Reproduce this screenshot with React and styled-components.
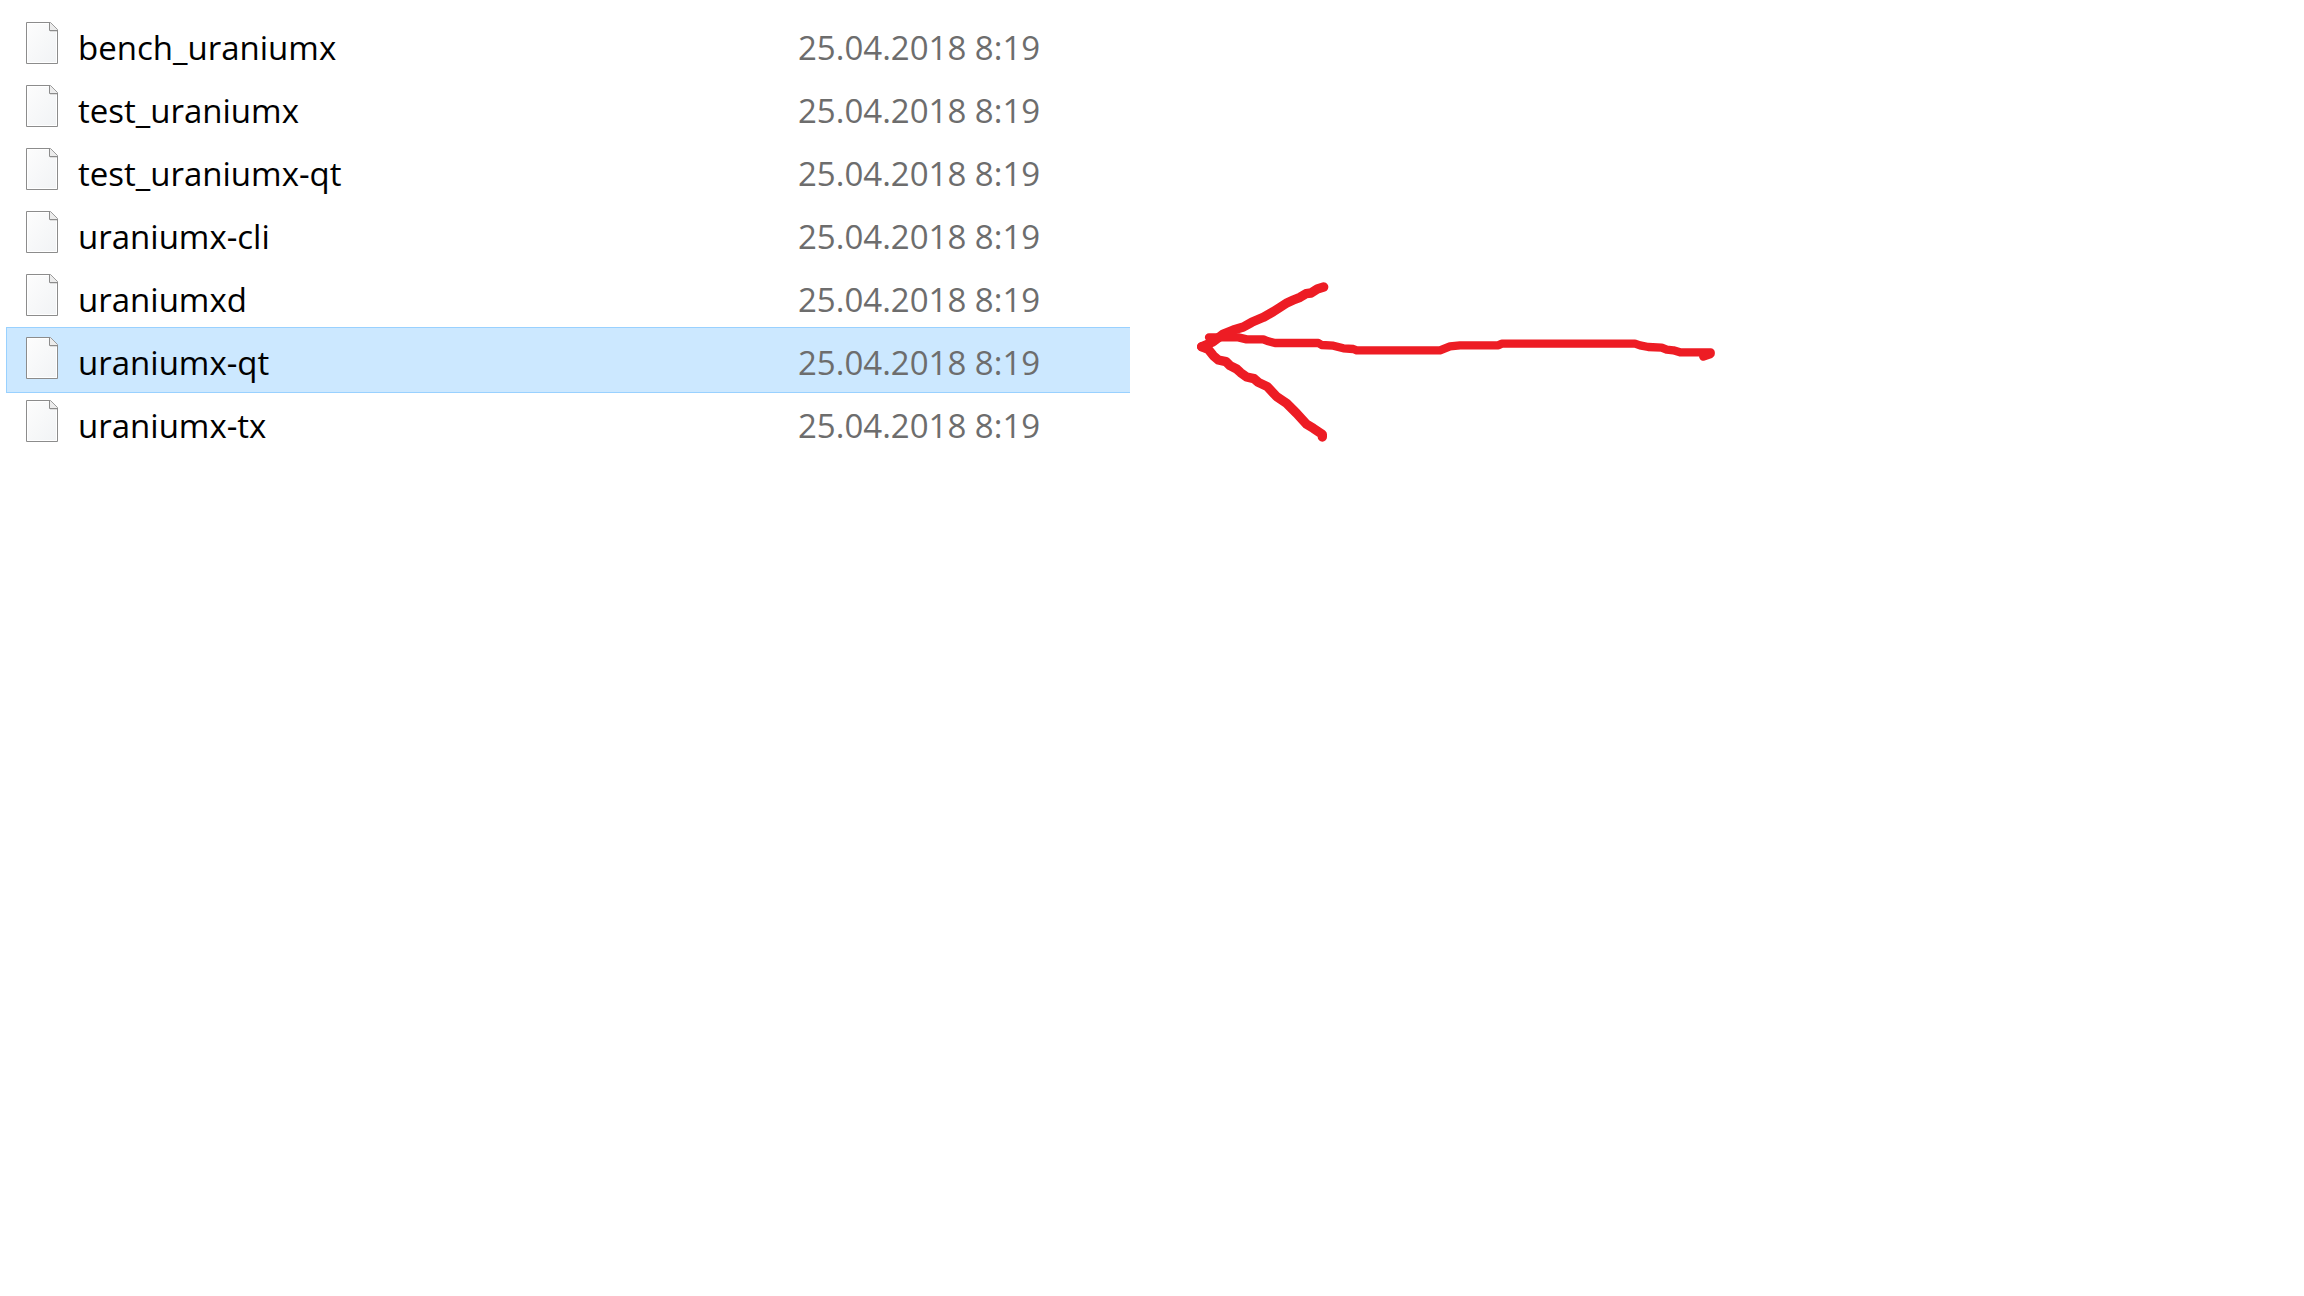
import React from "react";
import styled, { createGlobalStyle } from "styled-components";

const files = [
  { name: "bench_uraniumx", modified: "25.04.2018 8:19" },
  { name: "test_uraniumx", modified: "25.04.2018 8:19" },
  { name: "test_uraniumx-qt", modified: "25.04.2018 8:19" },
  { name: "uraniumx-cli", modified: "25.04.2018 8:19" },
  { name: "uraniumxd", modified: "25.04.2018 8:19" },
  { name: "uraniumx-qt", modified: "25.04.2018 8:19", selected: true },
  { name: "uraniumx-tx", modified: "25.04.2018 8:19" },
];

const FileIcon = () => (
  <IconSvg viewBox="0 0 32 42" aria-hidden="true">
    <defs>
      <linearGradient id="paper" x1="0" y1="0" x2="1" y2="1">
        <stop offset="0" stopColor="#fdfdfd" />
        <stop offset="1" stopColor="#f1f3f5" />
      </linearGradient>
    </defs>
    <path d="M0.5 0.5H24.5L31.5 7.5V41.5H0.5Z" fill="url(#paper)" />
    <path d="M1.5 40.5V1.5H22.5M30.5 10V40.5H1.5" fill="none" stroke="#fff" />
    <path d="M24 9.5H31" fill="none" stroke="#dedede" />
    <path d="M23.5 0.5H24.5L31.5 7.5V8.5H23.5Z" fill="#ececec" />
    <path
      d="M24.5 0.5H0.5V41.5H31.5V7.5M23.5 0.5V8.5H31.5"
      fill="none"
      stroke="#8c8c8c"
    />
    <path d="M24.5 0.5L31.5 7.5" fill="none" stroke="#9c9c9c" />
  </IconSvg>
);

const Arrow = () => (
  <ArrowSvg viewBox="30 18 1596 516" aria-hidden="true">
    <g strokeWidth="28">
      <path d="M431 51L412 57L393 69L378 71L360 82L340 90L322 98L300 112L280 125L250 142L215 157L190 171L160 180L130 192L100 215L65 230" />
      <path d="M65 230L85 238L100 257L115 270L138 275L150 287L170 297L182 308L200 321L222 326L235 337L262 350L290 380L320 400L350 430L380 463L400 475L427 493V501" />
    </g>
    <path
      strokeWidth="25"
      d="M87 202H175L200 208H250L262 213L285 219H415L425 225L460 227L490 235L520 237L530 241H780L795 235L810 229L840 226H955L965 221H1365L1380 226L1405 231L1445 233L1460 239L1480 241L1500 247H1592V252L1570 260"
    />
  </ArrowSvg>
);

const App = () => {
  return (
    <>
      <GlobalStyle />
      <Page>
        <FileTable>
          <FileList>
            {files.map((file) => (
              <FileRow key={file.name} $selected={file.selected}>
                <NameCell>
                  <FileIcon />
                  {file.name}
                </NameCell>
                <DateCell>{file.modified}</DateCell>
              </FileRow>
            ))}
          </FileList>
        </FileTable>
        <Arrow />
      </Page>
    </>
  );
};

const GlobalStyle = createGlobalStyle`
  body {
    margin: 0;
    background: #fff;
    font-family: "Open Sans", "Noto Sans", sans-serif;
  }
`;

const Page = styled.main`
  display: grid;
  grid-template-columns: 1124fr 1174fr;
  align-items: start;
  padding: 12px 0 0 6px;
`;

const FileTable = styled.table`
  display: block;
  font-size: 33px;
  line-height: 48px;
`;

const FileList = styled.tbody`
  display: block;
`;

// Neighbouring rows share a 3px band, so the highlight reaches into both
const FileRow = styled.tr`
  display: flex;
  box-sizing: border-box;
  height: 66px;
  margin-bottom: -3px;
  border: 1px solid ${(props) => (props.$selected ? "#99d1ff" : "transparent")};
  border-right: 0;
  background: ${(props) => (props.$selected ? "#cce8ff" : "transparent")};
`;

const NameCell = styled.td`
  display: flex;
  flex: 1;
  align-items: flex-start;
  gap: 20px;
  padding: 11px 0 0 19px;
  color: #000;
`;

const DateCell = styled.td`
  flex: 0 0 332px;
  padding: 11px 0 0;
  color: #6d6d6d;
`;

const IconSvg = styled.svg`
  flex: none;
  width: 32px;
  height: 42px;
  margin-top: -2px;
`;

const ArrowSvg = styled.svg`
  width: 532px;
  height: 172px;
  margin: 264px 0 0 60px;
  fill: none;
  stroke: #ed1c24;
  stroke-linecap: round;
  stroke-linejoin: round;
`;

export default App;
